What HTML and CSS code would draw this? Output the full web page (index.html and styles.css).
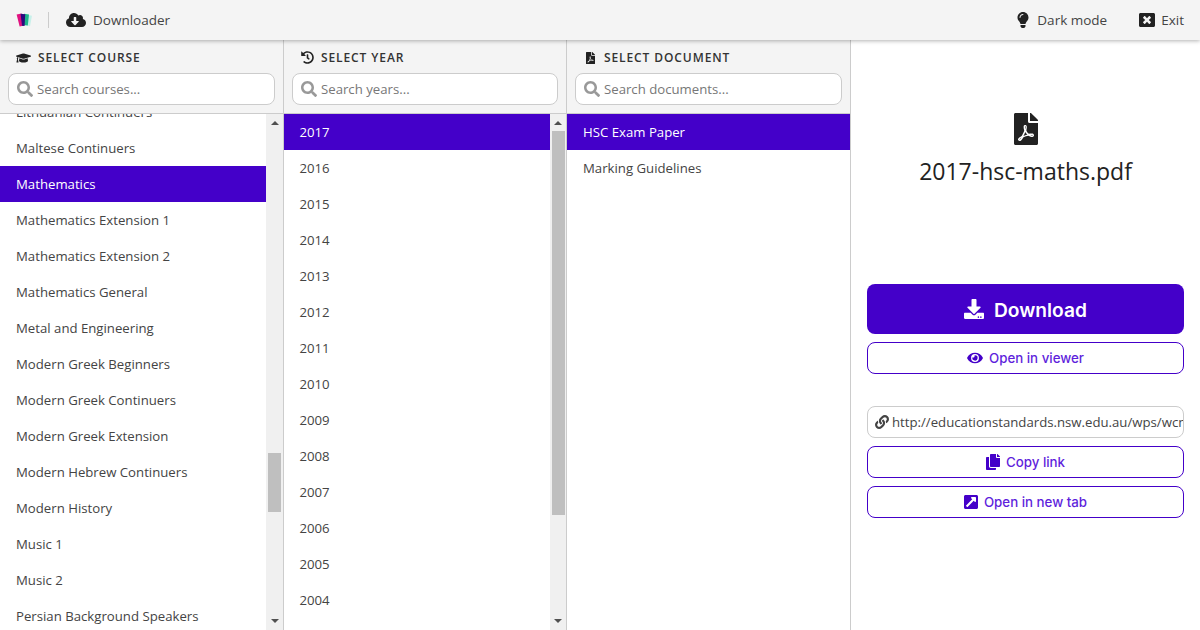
FILE: index.html
```html
<!DOCTYPE html>
<html lang="en">
<head>
    <meta charset="UTF-8">
    <meta name="viewport" content="width=device-width, initial-scale=1.0">
    <title>Downloader</title>
    <link rel="stylesheet" href="styles.css">
</head>
<body>
    <svg class="sprite" aria-hidden="true">
        <symbol id="i-search" viewBox="0 0 512 512"><path d="M505 442.7L405.3 343c-4.5-4.5-10.6-7-17-7H372c27.6-35.3 44-79.7 44-128C416 93.1 322.9 0 208 0S0 93.1 0 208s93.1 208 208 208c48.3 0 92.7-16.4 128-44v16.3c0 6.4 2.5 12.5 7 17l99.7 99.7c9.4 9.4 24.6 9.4 33.9 0l28.3-28.3c9.4-9.4 9.4-24.6.1-34zM208 336c-70.7 0-128-57.2-128-128 0-70.7 57.2-128 128-128 70.7 0 128 57.2 128 128 0 70.7-57.2 128-128 128z"/></symbol>
        <symbol id="i-pdf" viewBox="0 0 384 512"><path d="M181.9 256.1c-5-16-4.9-46.9-2-46.9 8.4 0 7.6 36.9 2 46.9zm-1.7 47.2c-7.7 20.2-17.3 43.3-28.4 62.7 18.3-7 39-17.2 62.9-21.9-12.7-9.6-24.9-23.4-34.5-40.8zM86.1 428.1c0 .8 13.2-5.4 34.9-40.2-6.7 6.3-29.1 24.5-34.9 40.2zM248 160h136v328c0 13.3-10.7 24-24 24H24c-13.3 0-24-10.7-24-24V24C0 10.7 10.7 0 24 0h200v136c0 13.2 10.8 24 24 24zm-8 171.8c-20-12.2-33.3-29-42.7-53.8 4.5-18.5 11.6-46.6 6.2-64.2-4.7-29.4-42.4-26.5-47.8-6.8-5 18.3-.4 44.1 8.1 77-11.6 27.6-28.7 64.6-40.8 85.8-.1 0-.1.1-.2.1-27.1 13.9-73.6 44.5-54.5 68 5.6 6.9 16 10 21.5 10 17.9 0 35.7-18 61.1-61.8 25.8-8.5 54.1-19.1 79-23.2 21.7 11.8 47.1 19.5 64 19.5 29.2 0 31.2-32 19.7-43.4-13.9-13.6-54.3-9.7-73.6-7.2zM377 105L279 7c-4.5-4.5-10.6-7-17-7h-6v128h128v-6.1c0-6.3-2.5-12.4-7-16.9zm-74.1 255.3c4.1-2.7-2.5-11.9-42.8-9 37.1 15.8 42.8 9 42.8 9z"/></symbol>
    </svg>

    <header class="topbar">
        <svg class="logo" viewBox="0 0 16 14">
            <path fill="#c8f0ea" d="M10 1.5l6 1.2-2 10.6-5-1z"/>
            <path fill="#1fb58a" d="M8 .8l5 .8-1.2 11-4.4-.6z"/>
            <path fill="#e0127f" d="M.6 1.6L5.6.6l2.6 12-4.6 1z"/>
            <path fill="#2b0a7e" d="M4.6 .7l4.6.5-.6 11.8-2.6-.2z"/>
        </svg>
        <span class="topbar-sep"></span>
        <svg class="topbar-icon cloud" viewBox="0 0 640 512"><path d="M537.6 226.6c4.1-10.7 6.4-22.4 6.4-34.6 0-53-43-96-96-96-19.7 0-38.1 6-53.3 16.2C367 64.2 315.3 32 256 32c-88.4 0-160 71.6-160 160 0 2.7.1 5.4.2 8.1C40.2 219.8 0 273.2 0 336c0 79.5 64.5 144 144 144h368c70.7 0 128-57.3 128-128 0-61.9-44-113.6-102.4-125.4zm-132.9 88.7L299.3 420.7c-6.2 6.2-16.4 6.2-22.6 0L171.3 315.3c-10.1-10.1-2.9-27.3 11.3-27.3H248V176c0-8.8 7.2-16 16-16h48c8.8 0 16 7.2 16 16v112h65.4c14.2 0 21.4 17.2 11.3 27.3z"/></svg>
        <span class="topbar-text">Downloader</span>
        <span class="topbar-fill"></span>
        <svg class="topbar-icon bulb" viewBox="0 0 352 512"><path d="M96.06 454.35c.01 6.29 1.87 12.45 5.36 17.69l17.09 25.69a31.99 31.99 0 0 0 26.64 14.28h61.71a31.99 31.99 0 0 0 26.64-14.28l17.09-25.69a31.989 31.989 0 0 0 5.36-17.69l.04-38.35H96.01l.05 38.35zM0 176c0 44.37 16.45 84.85 43.56 115.78 16.52 18.85 42.36 58.23 52.21 91.45.04.26.07.52.11.78h160.24c.04-.26.07-.51.11-.78 9.85-33.22 35.69-72.6 52.21-91.45C335.55 260.85 352 220.37 352 176 352 78.61 272.91-.3 175.45 0 73.44.31 0 82.97 0 176zm176-80c-44.11 0-80 35.89-80 80 0 8.84-7.16 16-16 16s-16-7.16-16-16c0-61.76 50.24-112 112-112 8.84 0 16 7.16 16 16s-7.16 16-16 16z"/></svg>
        <span class="topbar-text">Dark mode</span>
        <svg class="topbar-icon close" viewBox="0 0 512 512"><path d="M464 32H48C21.5 32 0 53.5 0 80v352c0 26.5 21.5 48 48 48h416c26.5 0 48-21.5 48-48V80c0-26.5-21.5-48-48-48zm-83.6 290.5c4.8 4.8 4.8 12.6 0 17.4l-40.5 40.5c-4.8 4.8-12.6 4.8-17.4 0L256 313.3l-66.5 67.1c-4.8 4.8-12.6 4.8-17.4 0l-40.5-40.5c-4.8-4.8-4.8-12.6 0-17.4l67.1-66.5-67.1-66.5c-4.8-4.8-4.8-12.6 0-17.4l40.5-40.5c4.8-4.8 12.6-4.8 17.4 0l66.5 67.1 66.5-67.1c4.8-4.8 12.6-4.8 17.4 0l40.5 40.5c4.8 4.8 4.8 12.6 0 17.4L313.3 256l67.1 66.5z"/></svg>
        <span class="topbar-text">Exit</span>
    </header>

    <main class="columns">
        <section class="col col-course">
            <div class="col-head">
                <h2 class="col-title">
                    <svg class="title-icon cap" viewBox="0 0 640 512"><path d="M622.34 153.2L343.4 67.5c-15.2-4.67-31.6-4.67-46.79 0L17.66 153.2c-23.54 7.23-23.54 38.36 0 45.59l48.63 14.94c-10.67 13.19-17.23 29.28-17.88 46.9C38.78 266.15 32 276.11 32 288c0 10.78 5.68 19.85 13.86 25.65L20.33 428.53C18.11 438.52 25.71 448 35.94 448h56.11c10.24 0 17.84-9.48 15.62-19.47L82.14 313.65C90.32 307.85 96 298.78 96 288c0-11.57-6.47-21.25-15.66-26.87.76-15.02 8.44-28.3 20.69-36.72L296.6 284.5c9.06 2.78 26.44 6.25 46.79 0l278.95-85.7c23.55-7.24 23.55-38.36 0-45.6zM352.79 315.09c-28.53 8.76-52.84 3.92-65.59 0l-145.02-44.55L128 384c0 35.35 85.96 64 192 64s192-28.65 192-64l-14.18-113.47-145.03 44.56z"/></svg>
                    Select course
                </h2>
                <div class="search">
                    <svg class="search-icon"><use href="#i-search"/></svg>
                    <span class="search-text">Search courses...</span>
                </div>
            </div>
            <div class="col-body">
                <ul class="list list-scrolled">
                    <li>Lithuanian Continuers</li>
                    <li>Maltese Continuers</li>
                    <li class="active">Mathematics</li>
                    <li>Mathematics Extension 1</li>
                    <li>Mathematics Extension 2</li>
                    <li>Mathematics General</li>
                    <li>Metal and Engineering</li>
                    <li>Modern Greek Beginners</li>
                    <li>Modern Greek Continuers</li>
                    <li>Modern Greek Extension</li>
                    <li>Modern Hebrew Continuers</li>
                    <li>Modern History</li>
                    <li>Music 1</li>
                    <li>Music 2</li>
                    <li>Persian Background Speakers</li>
                </ul>
                <div class="scrollbar">
                    <span class="arrow-up"></span>
                    <div class="track"><div class="thumb thumb-course"></div></div>
                    <span class="arrow-down"></span>
                </div>
            </div>
        </section>

        <section class="col col-year">
            <div class="col-head">
                <h2 class="col-title">
                    <svg class="title-icon history" viewBox="0 0 512 512"><path d="M504 255.531c.253 136.64-111.18 248.372-247.82 248.468-59.015.042-113.223-20.53-155.822-54.911-11.077-8.94-11.905-25.541-1.839-35.607l11.267-11.267c8.609-8.609 22.353-9.551 31.891-1.984C173.062 425.135 212.781 440 256 440c101.705 0 184-82.311 184-184 0-101.705-82.311-184-184-184-48.814 0-93.149 18.969-126.068 49.932l50.754 50.754c10.08 10.08 2.941 27.314-11.313 27.314H24c-8.837 0-16-7.163-16-16V38.627c0-14.254 17.234-21.393 27.314-11.314l49.372 49.372C129.209 34.136 189.552 8 256 8c136.81 0 247.747 110.78 248 247.531zm-180.912 78.784l9.823-12.63c8.138-10.463 6.253-25.542-4.21-33.679L288 256.349V152c0-13.255-10.745-24-24-24h-16c-13.255 0-24 10.745-24 24v135.651l65.409 50.874c10.463 8.137 25.541 6.253 33.679-4.21z"/></svg>
                    Select year
                </h2>
                <div class="search">
                    <svg class="search-icon"><use href="#i-search"/></svg>
                    <span class="search-text">Search years...</span>
                </div>
            </div>
            <div class="col-body">
                <ul class="list">
                    <li class="active">2017</li>
                    <li>2016</li>
                    <li>2015</li>
                    <li>2014</li>
                    <li>2013</li>
                    <li>2012</li>
                    <li>2011</li>
                    <li>2010</li>
                    <li>2009</li>
                    <li>2008</li>
                    <li>2007</li>
                    <li>2006</li>
                    <li>2005</li>
                    <li>2004</li>
                </ul>
                <div class="scrollbar">
                    <span class="arrow-up"></span>
                    <div class="track"><div class="thumb thumb-year"></div></div>
                    <span class="arrow-down"></span>
                </div>
            </div>
        </section>

        <section class="col col-doc">
            <div class="col-head">
                <h2 class="col-title">
                    <svg class="title-icon pdf"><use href="#i-pdf"/></svg>
                    Select document
                </h2>
                <div class="search">
                    <svg class="search-icon"><use href="#i-search"/></svg>
                    <span class="search-text">Search documents...</span>
                </div>
            </div>
            <div class="col-body">
                <ul class="list">
                    <li class="active">HSC Exam Paper</li>
                    <li>Marking Guidelines</li>
                </ul>
            </div>
        </section>

        <aside class="detail">
            <svg class="detail-icon"><use href="#i-pdf"/></svg>
            <h1 class="detail-name">2017-hsc-maths.pdf</h1>
            <a class="btn btn-main">
                <svg class="btn-main-icon" viewBox="0 0 512 512"><path d="M216 0h80c13.3 0 24 10.7 24 24v168h87.7c17.8 0 26.7 21.5 14.1 34.1L269.7 378.3c-7.5 7.5-19.8 7.5-27.3 0L90.1 226.1c-12.6-12.6-3.7-34.1 14.1-34.1H192V24c0-13.3 10.7-24 24-24zm296 376v112c0 13.3-10.7 24-24 24H24c-13.3 0-24-10.7-24-24V376c0-13.3 10.7-24 24-24h146.7l49 49c20.1 20.1 52.5 20.1 72.6 0l49-49H488c13.3 0 24 10.7 24 24zm-124 88c0-11-9-20-20-20s-20 9-20 20 9 20 20 20 20-9 20-20zm64 0c0-11-9-20-20-20s-20 9-20 20 9 20 20 20 20-9 20-20z"/></svg>
                <span class="btn-main-text">Download</span>
            </a>
            <a class="btn btn-line btn-viewer">
                <svg class="btn-icon eye" viewBox="0 0 576 512"><path d="M572.52 241.4C518.29 135.59 410.93 64 288 64S57.68 135.64 3.48 241.41a32.35 32.35 0 0 0 0 29.19C57.71 376.41 165.07 448 288 448s230.32-71.64 284.52-177.41a32.35 32.35 0 0 0 0-29.19zM288 400a144 144 0 1 1 144-144 143.93 143.93 0 0 1-144 144zm0-240a95.31 95.31 0 0 0-25.31 3.79 47.85 47.85 0 0 1-66.9 66.9A95.78 95.78 0 1 0 288 160z"/></svg>
                Open in viewer
            </a>
            <div class="url-box">
                <svg class="url-icon" viewBox="0 0 512 512"><path d="M326.612 185.391c59.747 59.809 58.927 155.698.36 214.59-.11.12-.24.25-.36.37l-67.2 67.2c-59.27 59.27-155.699 59.262-214.96 0-59.27-59.26-59.27-155.7 0-214.96l37.106-37.106c9.84-9.84 26.786-3.3 27.294 10.606.648 17.722 3.826 35.527 9.69 52.721 1.986 5.822.567 12.262-3.783 16.612l-13.087 13.087c-28.026 28.026-28.905 73.66-1.155 101.96 28.024 28.579 74.086 28.749 102.325.51l67.2-67.19c28.191-28.191 28.073-73.757 0-101.83-3.701-3.694-7.429-6.564-10.341-8.569a16.037 16.037 0 0 1-6.947-12.606c-.396-10.567 3.348-21.456 11.698-29.806l21.054-21.055c5.521-5.521 14.182-6.199 20.584-1.731a152.482 152.482 0 0 1 20.522 17.197zM467.547 44.449c-59.261-59.262-155.69-59.27-214.96 0l-67.2 67.2c-.12.12-.25.25-.36.37-58.566 58.892-59.387 154.781.36 214.59a152.454 152.454 0 0 0 20.521 17.196c6.402 4.468 15.064 3.789 20.584-1.731l21.054-21.055c8.35-8.35 12.094-19.239 11.698-29.806a16.037 16.037 0 0 0-6.947-12.606c-2.912-2.005-6.64-4.875-10.341-8.569-28.073-28.073-28.191-73.639 0-101.83l67.2-67.19c28.239-28.239 74.3-28.069 102.325.51 27.75 28.3 26.872 73.934-1.155 101.96l-13.087 13.087c-4.35 4.35-5.769 10.79-3.783 16.612 5.864 17.194 9.042 34.999 9.69 52.721.509 13.906 17.454 20.446 27.294 10.606l37.106-37.106c59.271-59.259 59.271-155.699.001-214.959z"/></svg>
                <span class="url-text">http://educationstandards.nsw.edu.au/wps/wcm/connect/2017-hsc-maths.pdf</span>
            </div>
            <a class="btn btn-line btn-copy">
                <svg class="btn-icon copy" viewBox="0 0 448 512"><path d="M320 448v40c0 13.255-10.745 24-24 24H24c-13.255 0-24-10.745-24-24V120c0-13.255 10.745-24 24-24h72v296c0 30.879 25.121 56 56 56h168zm0-344V0H152c-13.255 0-24 10.745-24 24v368c0 13.255 10.745 24 24 24h272c13.255 0 24-10.745 24-24V128H344c-13.2 0-24-10.8-24-24zm120.971-31.029L375.029 7.029A24 24 0 0 0 358.059 0H352v96h96v-6.059a24 24 0 0 0-7.029-16.97z"/></svg>
                Copy link
            </a>
            <a class="btn btn-line btn-tab">
                <svg class="btn-icon ext" viewBox="0 0 448 512"><path d="M448 80v352c0 26.51-21.49 48-48 48H48c-26.51 0-48-21.49-48-48V80c0-26.51 21.49-48 48-48h352c26.51 0 48 21.49 48 48zm-88 16H248.029c-21.313 0-32.08 25.861-16.971 40.971l31.984 31.987L67.515 364.485c-4.686 4.686-4.686 12.284 0 16.971l31.029 31.029c4.687 4.686 12.285 4.686 16.971 0l195.526-195.526 31.988 31.991C357.058 263.977 384 253.425 384 231.979V120c0-13.255-10.745-24-24-24z"/></svg>
                Open in new tab
            </a>
        </aside>
    </main>
</body>
</html>
```

FILE: styles.css
```css
* {
    box-sizing: border-box;
}

html, body {
    height: 100%;
}

body {
    margin: 0;
    font-family: "Open Sans", "Noto Sans", sans-serif;
    font-size: 13.2px;
    color: #444;
    background-color: #fff;
    overflow: hidden;
    display: flex;
    flex-direction: column;
}

.sprite {
    display: none;
}

svg {
    fill: currentColor;
    flex: none;
}

/* top bar */
.topbar {
    position: relative;
    z-index: 2;
    height: 40px;
    flex: none;
    display: flex;
    align-items: center;
    padding: 0 16px;
    background-color: #f4f4f4;
    box-shadow: 0 1px 4px rgba(0, 0, 0, 0.3);
}

.logo {
    width: 16px;
    height: 14px;
}

.topbar-sep {
    width: 1px;
    height: 16px;
    margin: 0 17px 0 16px;
    background-color: #ccc;
}

.topbar-icon {
    color: #222;
}

.cloud {
    width: 20px;
    height: 16px;
    margin-right: 7px;
}

.bulb {
    width: 12px;
    height: 16px;
    margin-right: 8px;
}

.close {
    width: 16px;
    height: 16px;
    margin: 0 6px 0 32px;
}

.topbar-text {
    font-size: 13.5px;
    color: #444;
}

.topbar-fill {
    flex: 1;
}

/* columns */
.columns {
    flex: 1;
    min-height: 0;
    display: grid;
    grid-template-columns: 284px 283px 284px 349px;
}

.col {
    display: flex;
    flex-direction: column;
    min-height: 0;
    border-right: 1px solid #ccc;
}

.col-head {
    flex: none;
    height: 74px;
    padding: 0 8px;
    background-color: #f4f4f4;
    border-bottom: 1px solid #ccc;
}

.col-title {
    height: 33px;
    margin: 0;
    padding: 2px 0 0 8px;
    display: flex;
    align-items: center;
    gap: 6px;
    font-size: 12px;
    font-weight: 600;
    letter-spacing: 0.9px;
    text-transform: uppercase;
    color: #333;
}

.title-icon {
    color: #222;
}

.cap {
    width: 15px;
    height: 12px;
    margin-right: 1px;
}

.history {
    width: 13px;
    height: 13px;
    margin: 0 1px;
}

.pdf {
    width: 9px;
    height: 12px;
    margin: 0 3px;
}

.search {
    height: 32px;
    display: flex;
    align-items: center;
    gap: 4px;
    padding: 0 8px;
    background-color: #fff;
    border: 1px solid #ccc;
    border-radius: 8px;
}

.search-icon {
    width: 16px;
    height: 16px;
    color: #999;
}

.search-text {
    color: #777;
}

.col-body {
    flex: 1;
    min-height: 0;
    display: flex;
    overflow: hidden;
}

.list {
    flex: 1;
    min-width: 0;
    margin: 0;
    padding: 0;
    list-style: none;
}

.list-scrolled {
    margin-top: -20px;
}

.list li {
    height: 36px;
    padding: 0 16px;
    line-height: 36px;
    white-space: nowrap;
}

.col-year .list li {
    padding-left: 15.5px;
}

.list li.active {
    background-color: #4400c9;
    color: #fff;
    font-weight: 500;
}

/* fake scrollbars, the page does not really scroll */
.scrollbar {
    flex: none;
    width: 17px;
    display: flex;
    flex-direction: column;
    align-items: center;
    background-color: #f0f0f0;
}

.col-year .scrollbar {
    width: 16px;
}

.arrow-up, .arrow-down {
    flex: none;
    width: 0;
    height: 0;
    border-left: 4px solid transparent;
    border-right: 4px solid transparent;
}

.arrow-up {
    margin: 7px 0 6px;
    border-bottom: 4px solid #505050;
}

.arrow-down {
    margin: 6px 0 7px;
    border-top: 4px solid #505050;
}

.track {
    flex: 1;
    width: 100%;
    padding: 0 2px;
}

.col-year .track {
    padding: 0 1px 0 2px;
}

.thumb {
    background-color: #bfbfbf;
}

.thumb-course {
    height: 59px;
    margin-top: 322px;
}

.thumb-year {
    height: 384px;
}

/* right panel */
.detail {
    display: flex;
    flex-direction: column;
    padding: 0 16px;
    font-family: Inter, sans-serif;
}

.detail-icon {
    width: 24px;
    height: 32px;
    margin: 73px auto 0;
    color: #222;
}

.detail-name {
    margin: 8px 0 95px;
    height: 36px;
    line-height: 36px;
    text-align: center;
    font-family: "Open Sans", sans-serif;
    font-size: 23px;
    font-weight: 500;
    color: #222;
    white-space: nowrap;
}

.btn {
    display: flex;
    align-items: center;
    justify-content: center;
    border-radius: 8px;
    font-weight: 500;
}

.btn-main {
    height: 50px;
    gap: 10px;
    background-color: #4400c9;
    color: #fff;
    font-size: 19.2px;
    font-weight: 600;
}

.btn-main-icon {
    width: 20px;
    height: 20px;
}

.btn-main-text {
    padding-top: 2px;
}

.btn-line {
    height: 32px;
    gap: 6px;
    border: 1px solid #4400c9;
    color: #5f1fdc;
    font-size: 13.3px;
}

.btn-viewer, .btn-copy, .btn-tab {
    margin-top: 8px;
}

.btn-icon {
    color: #4400c9;
}

.eye {
    width: 16px;
    height: 14px;
}

.copy {
    width: 14px;
    height: 16px;
}

.ext {
    width: 14px;
    height: 16px;
}

.url-box {
    height: 32px;
    margin-top: 32px;
    display: flex;
    align-items: center;
    gap: 3px;
    padding: 0 0 0 7px;
    border: 1px solid #ccc;
    border-radius: 8px;
    overflow: hidden;
}

.url-icon {
    width: 14px;
    height: 14px;
    color: #444;
}

.url-text {
    font-family: "Open Sans", sans-serif;
    white-space: nowrap;
    color: #444;
}
```
